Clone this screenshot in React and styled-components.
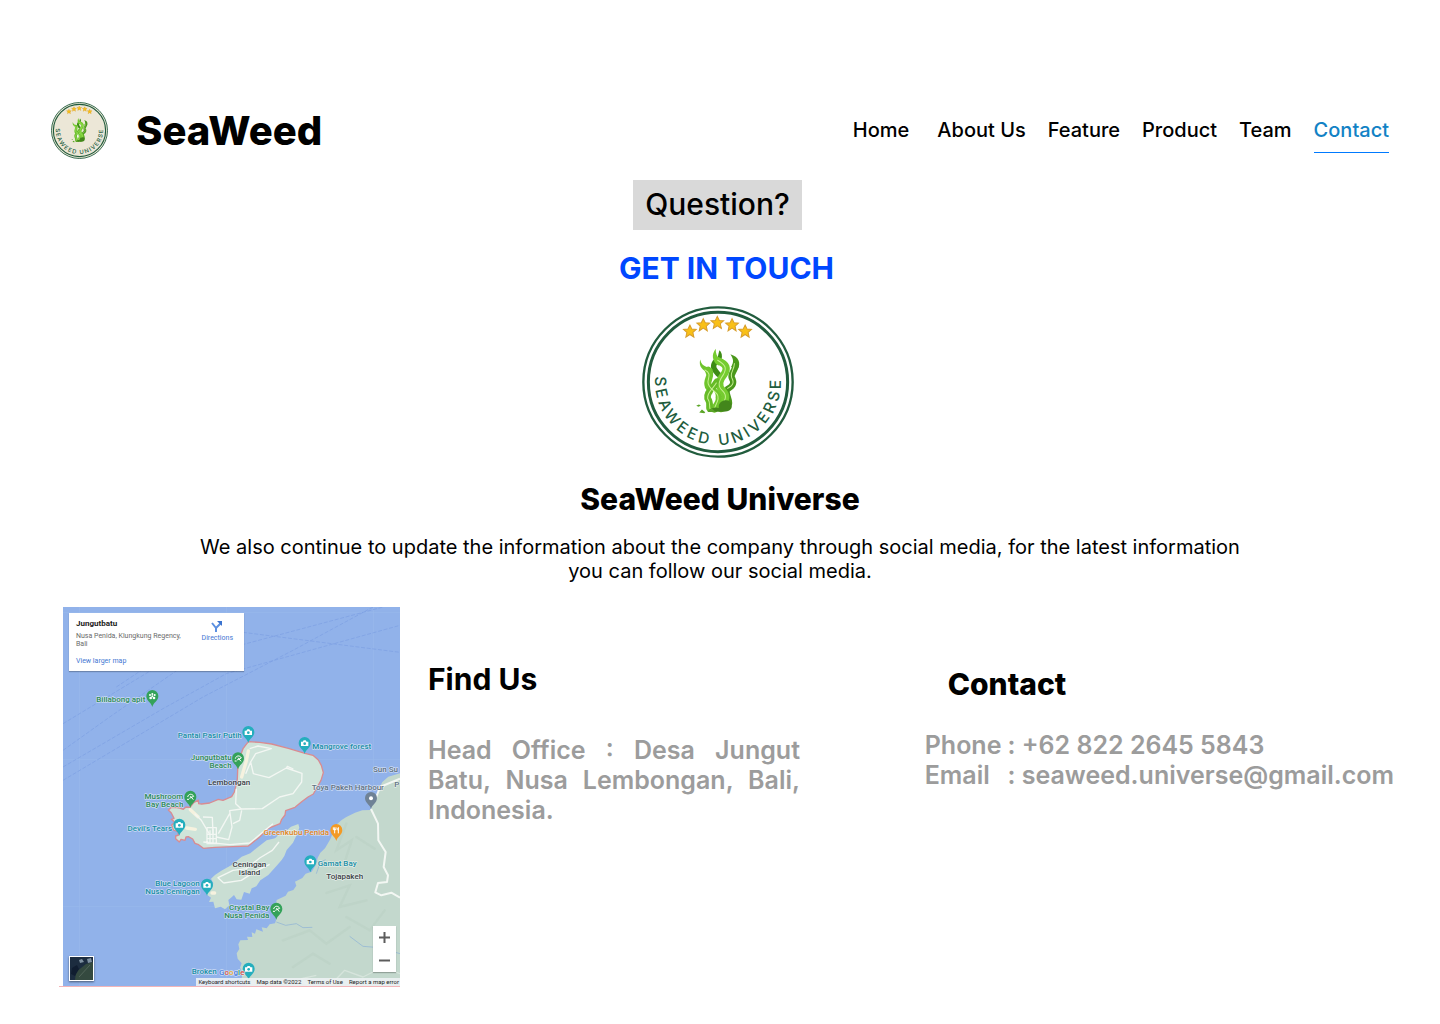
import React from "react";
import styled, { createGlobalStyle } from "styled-components";

const GlobalStyle = createGlobalStyle`
  *, *::before, *::after { box-sizing: border-box; }
  body {
    margin: 0;
    background: #fff;
    color: #000;
    font-family: Inter, "Liberation Sans", sans-serif;
  }
  h1, h2, h3, p, dl, dd, dt, ul { margin: 0; padding: 0; }
`;

const Page = styled.div`
  padding: 102px 0 37px;
`;

const Header = styled.header`
  display: flex;
  align-items: center;
  justify-content: space-between;
  padding: 0 51px;
`;

const Brand = styled.a`
  display: flex;
  align-items: center;
  gap: 28px;
  color: inherit;
  text-decoration: none;
  font-size: 40px;
  line-height: 48px;
  font-weight: 800;
`;

const Nav = styled.nav`
  display: flex;
  gap: 22px;
`;

const NavLink = styled.a`
  padding: 10px 0;
  margin-right: ${(p) => (p.$lead ? "6px" : "0")};
  border-bottom: 1px solid ${(p) => (p.$active ? "#007aff" : "transparent")};
  color: ${(p) => (p.$active ? "#1282c5" : "#000")};
  font-size: 20px;
  line-height: 24px;
  font-weight: 500;
  text-decoration: none;
  white-space: nowrap;
`;

const Intro = styled.section`
  display: flex;
  flex-direction: column;
  align-items: center;
  gap: 20px;
  padding: 21px 5px 0 0;
`;

const Tag = styled.p`
  padding: 6px 12px 8px;
  background: #d9d9d9;
  font-size: 30px;
  line-height: 36px;
  font-weight: 500;
`;

const Heading = styled.h2`
  padding-left: ${(p) => p.$indent || 0}px;
  color: ${(p) => p.$color || "#000"};
  font-size: 30px;
  line-height: 36px;
  font-weight: ${(p) => (p.$heavy ? 800 : 700)};
`;

const About = styled.section`
  display: flex;
  flex-direction: column;
  align-items: center;
  gap: 18px;
  padding: 23px 20px 24px;
`;

const Lead = styled.p`
  max-width: 1060px;
  font-size: 20px;
  line-height: 24px;
  text-align: center;
`;

const Details = styled.section`
  display: flex;
  align-items: flex-start;
  gap: 28px;
  padding: 0 46px 0 59px;
`;

const Block = styled.div`
  display: flex;
  flex-direction: column;
  flex: ${(p) => (p.$fill ? "0 1 372px" : "0 0 auto")};
  margin-left: ${(p) => (p.$fill ? "0" : "auto")};
  gap: ${(p) => p.$gap}px;
  padding-top: ${(p) => p.$top}px;
`;

const Address = styled.p`
  color: #9c9c9c;
  font-size: 25px;
  line-height: 30px;
  font-weight: 600;
  text-align: justify;
`;

const ContactList = styled.dl`
  display: grid;
  grid-template-columns: auto auto;
  column-gap: 6px;
  color: #9c9c9c;
  font-size: 25px;
  line-height: 30px;
  font-weight: 600;
  white-space: nowrap;
`;

const PlainLink = styled.a`
  color: inherit;
  text-decoration: none;
`;

/* ---------- map ---------- */

const MapFrame = styled.div`
  flex: 0 0 341px;
  padding-left: 4px;
  border-bottom: 1px solid #f3b5b8;
`;

const MapCanvas = styled.div`
  position: relative;
  height: 379px;
  overflow: hidden;
  background: #91b2ea;
  font-family: Roboto, "Liberation Sans", sans-serif;
`;

const MapArt = styled.svg`
  display: block;
  width: 337px;
  height: 379px;
`;

const MapCard = styled.div`
  position: absolute;
  top: 6px;
  left: 6px;
  display: flex;
  justify-content: space-between;
  width: 175px;
  height: 58px;
  padding: 6px 11px 4px 7px;
  background: #fff;
  box-shadow: 0 1px 1px rgba(0, 0, 0, 0.25);
  color: #6a6a6a;
  font-size: 7px;
  line-height: 8px;
`;

const CardText = styled.div`
  width: 108px;
`;

const CardTitle = styled.h3`
  margin-bottom: 3px;
  color: #222;
  font-size: 8px;
  line-height: 10px;
  font-weight: 700;
`;

const CardLink = styled.a`
  display: flex;
  flex-direction: column;
  align-items: center;
  gap: 2px;
  padding-top: ${(p) => (p.$icon ? "1px" : "9px")};
  align-self: flex-start;
  width: fit-content;
  color: #4478d3;
  text-decoration: none;
`;

const ZoomBox = styled.div`
  position: absolute;
  right: 4px;
  bottom: 14px;
  display: flex;
  flex-direction: column;
  width: 23px;
  background: #fff;
  box-shadow: 0 1px 1px rgba(0, 0, 0, 0.25);
`;

const ZoomButton = styled.button`
  display: grid;
  place-items: center;
  height: 23px;
  padding: 0;
  border: 0;
  background: none;
`;

const Thumb = styled.button`
  position: absolute;
  left: 6px;
  bottom: 5px;
  width: 25px;
  height: 25px;
  padding: 0;
  border: 1px solid #fff;
  background: #1b2a3d;
  box-shadow: 0 1px 2px rgba(0, 0, 0, 0.5);
  svg { display: block; }
`;

const Credits = styled.div`
  position: absolute;
  right: 0;
  bottom: 0;
  display: flex;
  gap: 6px;
  padding: 0 1px 0 2px;
  background: rgba(240, 243, 246, 0.85);
  color: #222;
  font-size: 6px;
  line-height: 8px;
  white-space: nowrap;
`;

const pinColors = { teal: "#25aebd", green: "#34a25a", orange: "#f39a25", grey: "#6f8296" };

const glyphs = {
  camera: (
    <g>
      <path d="M-11-5h5l3-4h6l3 4h5V8h-22z" fill="#fff" />
      <circle cx="0" cy="1" r="4" fill="#25aebd" />
    </g>
  ),
  beach: (
    <g stroke="#fff" strokeWidth="3" fill="none">
      <path d="M-8 0C-6-10 6-11 10-2L-3 4M0-3L9 8" />
      <path d="M-10 7h6" />
    </g>
  ),
  park: (
    <g fill="#fff">
      <circle cx="-7" cy="-4" r="3" />
      <circle cx="0" cy="-7" r="3" />
      <circle cx="7" cy="-4" r="3" />
      <circle cx="-5" cy="5" r="4" />
      <circle cx="5" cy="5" r="4" />
      <circle cx="0" cy="0" r="3" />
    </g>
  ),
  food: (
    <g stroke="#fff" strokeWidth="3" fill="none">
      <path d="M-5-9v18M-9-9v7h8v-7M6-9v18M6-8q-4 4 0 9" />
    </g>
  ),
  dot: <circle r="6" fill="#fff" />,
};

const pins = [
  { x: 268, y: 300, color: "green", glyph: "park" },
  { x: 556, y: 408, color: "teal", glyph: "camera" },
  { x: 725, y: 441, color: "teal", glyph: "camera" },
  { x: 525, y: 487, color: "green", glyph: "beach" },
  { x: 382, y: 602, color: "green", glyph: "beach" },
  { x: 349, y: 686, color: "teal", glyph: "camera" },
  { x: 924, y: 606, color: "grey", glyph: "dot" },
  { x: 820, y: 702, color: "orange", glyph: "food" },
  { x: 742, y: 796, color: "teal", glyph: "camera" },
  { x: 432, y: 866, color: "teal", glyph: "camera" },
  { x: 640, y: 938, color: "green", glyph: "beach" },
  { x: 557, y: 1118, color: "teal", glyph: "camera" },
];

const labels = [
  { x: 247, y: 284, t: "Billabong apit", c: "#2c8a57", end: true },
  { x: 536, y: 394, t: "Pantai Pasir Putih", c: "#168ea5", end: true },
  { x: 748, y: 427, t: "Mangrove forest", c: "#168ea5" },
  { x: 506, y: 460, t: "Jungutbatu", c: "#2c8a57", end: true },
  { x: 506, y: 484, t: "Beach", c: "#2c8a57", end: true },
  { x: 562, y: 535, t: "Lembongan", c: "#3c4247", end: true },
  { x: 361, y: 575, t: "Mushroom", c: "#2c8a57", end: true },
  { x: 361, y: 599, t: "Bay Beach", c: "#2c8a57", end: true },
  { x: 327, y: 671, t: "Devil's Tears", c: "#168ea5", end: true },
  { x: 930, y: 496, t: "Sun Su", c: "#5f7282" },
  { x: 746, y: 548, t: "Toya Pakeh Harbour", c: "#5f7282" },
  { x: 994, y: 541, t: "P", c: "#5f7282" },
  { x: 798, y: 685, t: "Greenkubu Penida", c: "#e08422", end: true },
  { x: 764, y: 778, t: "Gamat Bay", c: "#168ea5" },
  { x: 790, y: 815, t: "Tojapakeh", c: "#3c4247" },
  { x: 610, y: 781, t: "Ceningan", c: "#3c4247", end: true },
  { x: 592, y: 805, t: "island", c: "#3c4247", end: true },
  { x: 410, y: 838, t: "Blue Lagoon", c: "#168ea5", end: true },
  { x: 410, y: 862, t: "Nusa Ceningan", c: "#168ea5", end: true },
  { x: 619, y: 910, t: "Crystal Bay", c: "#2c8a57", end: true },
  { x: 619, y: 934, t: "Nusa Penida", c: "#2c8a57", end: true },
  { x: 386, y: 1102, t: "Broken", c: "#168ea5" },
];

const MapLabel = styled.text`
  font-size: 24px;
  font-weight: 500;
  stroke: rgba(255, 255, 255, 0.55);
  stroke-width: 4px;
  stroke-linejoin: round;
  paint-order: stroke;
`;

function Pin({ x, y, color, glyph }) {
  return (
    <g transform={`translate(${x} ${y - 29})`}>
      <path
        d="M0 29C-3 15-18 12-18-4A18 18 0 0 1 18-4C18 12 3 15 0 29Z"
        fill={pinColors[color]}
      />
      <g transform="translate(0 -3)">{glyphs[glyph]}</g>
    </g>
  );
}

function MapDrawing() {
  return (
    <MapArt viewBox="0 0 1011 1137" role="img" aria-label="Map of Nusa Lembongan">
      <g stroke="#9ab9ec" strokeWidth="2">
        <path d="M50 0V1137M491 0V1137M932 0V620M0 457H1011M0 898H560M0 16H1011" />
      </g>
      <g stroke="#7b9fe2" strokeWidth="2" fill="none" strokeDasharray="12 5">
        <path d="M0 350L480 60M0 430L140 330L400 150L960 0M0 480L300 305L490 200L1011 55M0 520L420 270L690 130L930 0" />
        <path d="M540 76L1011 136M160 240L250 180" />
      </g>
      <path
        fill="#c3d8cd"
        d="M1011 499L976 509 958 525 951 539 944 560 936 579 921 609 898 610 876 617 850 630 836 639 819 654 811 674 801 698 786 724 772 737 764 752 758 775 746 794 728 800 718 813 696 824 700 836 691 849 675 854 668 866 641 879 636 905 644 925 636 949 620 952 611 964 596 961 600 974 580 967 576 980 566 976 568 990 552 989 555 999 532 1000 526 1012 529 1026 521 1039 524 1055 536 1069 531 1082 539 1096 536 1114 551 1137H1011Z"
      />
      <g fill="none" stroke="#b9cfc4" strokeWidth="7" strokeLinecap="round" opacity=".5">
        <path d="M850 650L820 730 866 700 842 775M790 858L860 835 830 900 910 880M660 1000L740 970 790 1010 860 960M690 1080L750 1040 800 1070M850 930L920 970 965 910M880 690L935 725" />
      </g>
      <path
        fill="#c9ded3"
        d="M706 651L709 662 701 684 690 707 671 729 664 747 656 759 641 776 616 804 592 820 580 838 566 844 560 860 543 855 535 878 521 877 513 864 504 872 496 879 499 895 486 907 473 899 456 904 451 884 438 885 444 872 430 862 440 846 451 829 444 815 456 804 475 791 506 774 536 749 562 739 586 719 611 700 636 694 652 679 666 674 684 659Z"
      />
      <path
        fill="#cfe4da"
        stroke="#d98b91"
        strokeWidth="4"
        strokeLinejoin="round"
        d="M556 404L590 406 626 411 676 424 726 439 750 445 766 459 775 475 781 497 774 520 766 534 751 561 735 570 716 584 696 601 668 611 666 624 656 637 651 650 616 664 590 690 556 717 510 719 456 721 421 724 407 713 396 709 389 696 376 689 369 690 366 700 354 697 349 705 338 695 338 687 347 684 344 674 331 669 326 654 336 646 325 637 333 634 325 618 316 609 324 602 336 601 350 603 361 607 369 600 381 601 392 587 406 579 407 590 416 591 440 588 466 577 480 580 506 569 514 555 518 539 523 516 524 489 525 465 531 449 540 425Z"
      />
      <g fill="none" stroke="#f6f2df" strokeLinecap="round" strokeLinejoin="round">
        <path strokeWidth="10" d="M556 432L550 462 536 510M382 608L405 629M371 663L397 667M455 858h-8" />
      </g>
      <g fill="none" stroke="#f3f7f3" strokeWidth="4" strokeLinejoin="round">
        <path d="M560 425L585 417 625 425 578 440 563 465 571 500 618 512 670 483 717 499 716 525 690 560 650 570 598 605 535 606 518 590 520 545M563 465L548 500M671 483L673 478 691 486" />
        <path d="M395 620L415 640 440 682M535 606L500 611 507 660 497 698 460 690M420 630L448 631 450 680M500 620L466 680M536 610L530 640 510 650" />
        <path d="M432 662H460V710H432ZM441 670V709M450 665V710M432 682H460M432 695H460M421 705L500 713 560 708 630 650" />
        <path d="M482 828L465 812 510 790 550 785 590 753 628 730 648 705M482 828L535 820 577 793 620 772" />
        <path strokeWidth="6" d="M924 606L945 650 946 700 968 735 962 780 975 805 972 825 945 828 937 856 955 865 985 857 1011 872M936 580L951 540 1011 515" />
        <path d="M735 1137L715 1115 760 1105M800 1137L845 1090 900 1110 960 1080 1011 1100" opacity=".4" />
      </g>
      <g fill="none" stroke="#8bb0d6" strokeWidth="2">
        <path d="M640 945L668 955 700 950 720 962 748 961M860 988L900 1018 950 1022 1011 1040M760 800L772 765 788 758" />
      </g>
      {pins.map((p) => (
        <Pin key={`${p.x}-${p.y}`} {...p} />
      ))}
      {labels.map((l) => (
        <MapLabel key={l.t} x={l.x} y={l.y} fill={l.c} textAnchor={l.end ? "end" : "start"}>
          {l.t}
        </MapLabel>
      ))}
      <MapLabel x="468" y="1103">
        <tspan fill="#4c7fdf">G</tspan>
        <tspan fill="#dc5146">o</tspan>
        <tspan fill="#e8ae22">o</tspan>
        <tspan fill="#4c7fdf">g</tspan>
        <tspan fill="#39a257">l</tspan>
        <tspan fill="#dc5146">e</tspan>
      </MapLabel>
    </MapArt>
  );
}

function LocationMap() {
  return (
    <MapFrame>
      <MapCanvas>
        <MapDrawing />
        <MapCard>
          <CardText>
            <CardTitle>Jungutbatu</CardTitle>
            <p>Nusa Penida, Klungkung Regency, Bali</p>
            <CardLink href="#map">View larger map</CardLink>
          </CardText>
          <CardLink href="#directions" $icon>
            <svg width="12" height="12" viewBox="0 0 12 12" fill="none" stroke="#5b8fe0" strokeWidth="2">
              <path d="M5 12V8L1 3M5 8L10 3" />
              <path d="M6 1h5v5z" fill="#3a73cf" stroke="none" />
            </svg>
            Directions
          </CardLink>
        </MapCard>
        <Thumb aria-label="Show satellite imagery">
          <svg width="23" height="23" viewBox="0 0 23 23">
            <path d="M0 0h23v23H0z" fill="#1c2c3f" />
            <path d="M6 15L16 7 23 5V23H5z" fill="#34493f" />
            <path d="M9 3l3-1 2 3-4 1zM17 2l4-1 1 4-4 1z" fill="#7f91a0" />
            <path d="M2 11l5-3 2 4-4 7-4-2z" fill="#101d30" />
            <path d="M9 20L20 8" stroke="#52655a" />
          </svg>
        </Thumb>
        <ZoomBox>
          <ZoomButton aria-label="Zoom in">
            <svg width="11" height="11" viewBox="0 0 11 11" stroke="#5c5c5c" strokeWidth="2">
              <path d="M0 5.5h11M5.5 0v11" />
            </svg>
          </ZoomButton>
          <ZoomButton aria-label="Zoom out">
            <svg width="11" height="11" viewBox="0 0 11 11" stroke="#5c5c5c" strokeWidth="2">
              <path d="M0 5.5h11" />
            </svg>
          </ZoomButton>
        </ZoomBox>
        <Credits>
          <span>Keyboard shortcuts</span>
          <span>Map data ©2022</span>
          <span>Terms of Use</span>
          <span>Report a map error</span>
        </Credits>
      </MapCanvas>
    </MapFrame>
  );
}

/* ---------- logo ---------- */

const LogoText = styled.text`
  fill: #215c3d;
  font-family: Inter, sans-serif;
  font-size: 46px;
  font-weight: 500;
  letter-spacing: 10px;
`;

const stars = [
  [143, 75],
  [183, 56],
  [225, 49],
  [269, 56],
  [308, 75],
];

function Logo({ size, fill, id }) {
  return (
    <svg width={size} height={size} viewBox="0 0 454 454" role="img" aria-label="SeaWeed Universe logo">
      <circle cx="227" cy="227" r="223" fill={fill} stroke="#215c3d" strokeWidth="7" />
      <circle cx="227" cy="227" r="208" fill="none" stroke="#215c3d" strokeWidth="9" />
      {stars.map(([x, y]) => (
        <path
          key={x}
          transform={`translate(${x} ${y})`}
          d="M0-18L6-6 19-5 9 4 12 18 0 10-12 18-9 4-19-5-6-6Z"
          fill="#f9c017"
          stroke="#d79d2c"
          strokeWidth="3"
        />
      ))}
      <path id={id} d="M47 173A188 188 0 1 0 407 173" fill="none" />
      <LogoText textAnchor="middle">
        <textPath href={`#${id}`} startOffset="50%">SEAWEED UNIVERSE</textPath>
      </LogoText>
      <g fill="none" strokeLinecap="round" strokeLinejoin="round">
        <path fill="#3e8c16" d="M231 132C242 142 240 158 233 166L224 162Z" />
        <path stroke="#3e8c16" strokeWidth="16" d="M218 168C208 184 218 192 228 204" />
        <path fill="#4a981b" d="M264 144C290 152 296 170 286 190L266 182C276 166 272 156 264 144Z" />
        <path stroke="#4a981b" strokeWidth="19" d="M279 180C276 196 264 202 268 214C278 232 270 240 256 248C246 258 260 272 260 290" />
        <path fill="#6fc52c" d="M174 160C168 182 182 192 196 198L212 190C200 180 178 186 174 160Z" />
        <path stroke="#6fc52c" strokeWidth="21" d="M198 192C212 210 190 220 198 240C204 252 228 258 230 274C234 290 218 300 216 308" />
        <path fill="#75cc2f" d="M220 128C206 148 210 164 228 178L246 168C236 158 220 158 220 128Z" />
        <path stroke="#75cc2f" strokeWidth="22" d="M228 164C252 174 258 186 244 206C232 220 224 236 240 252C258 270 248 282 236 306" />
        <path stroke="#66bb27" strokeWidth="20" d="M224 226C212 248 192 256 196 276C206 290 200 300 202 306" />
        <path stroke="#c6ef91" strokeWidth="3" d="M188 191C208 200 198 214 197 226C196 244 216 252 225 264C234 280 218 294 217 306M226 162C250 176 254 186 243 205C230 224 224 238 240 253C258 270 246 284 236 300M276 172C276 190 262 200 268 214C278 232 268 238 256 246M222 230C210 250 194 258 196 276C206 290 200 298 203 306" />
        <path fill="#fff" d="M214 254C221 262 223 272 215 284C206 272 207 264 214 254Z" />
        <path fill="#43861b" d="M229 299C231 279 264 273 268 296C270 309 260 316 244 316H196C205 305 220 301 229 305Z" />
        <path fill="#5ba527" d="M196 316l12-10 12 10zM171 318l8-9 10 8-3 3zM162 298l8-4 6 3-7 4z" />
      </g>
    </svg>
  );
}

const navItems = ["Home", "About Us", "Feature", "Product", "Team", "Contact"];

export default function App() {
  return (
    <Page>
      <GlobalStyle />
      <Header>
        <Brand href="#home">
          <Logo size={57} fill="#ece7d7" id="brand-arc" />
          SeaWeed
        </Brand>
        <Nav>
          {navItems.map((item) => (
            <NavLink
              key={item}
              href={`#${item.toLowerCase().replace(" ", "-")}`}
              $lead={item === "Home"}
              $active={item === "Contact"}
            >
              {item}
            </NavLink>
          ))}
        </Nav>
      </Header>
      <main>
        <Intro>
          <Tag>Question?</Tag>
          <Heading $color="#0047ff" $indent={18}>GET IN TOUCH</Heading>
          <Logo size={152} fill="#fff" id="intro-arc" />
        </Intro>
        <About>
          <Heading $heavy>SeaWeed Universe</Heading>
          <Lead>
            We also continue to update the information about the company through social media, for
            the latest information you can follow our social media.
          </Lead>
        </About>
        <Details>
          <LocationMap />
          <Block $fill $top={54} $gap={38}>
            <Heading>Find Us</Heading>
            <Address>Head Office : Desa Jungut Batu, Nusa Lembongan, Bali, Indonesia.</Address>
          </Block>
          <Block $top={59} $gap={28}>
            <Heading $heavy $indent={23}>Contact</Heading>
            <ContactList>
              <dt>Phone</dt>
              <dd>: <PlainLink href="tel:+6282226455843">+62 822 2645 5843</PlainLink></dd>
              <dt>Email</dt>
              <dd>: <PlainLink href="mailto:seaweed.universe@gmail.com">seaweed.universe@gmail.com</PlainLink></dd>
            </ContactList>
          </Block>
        </Details>
      </main>
    </Page>
  );
}
